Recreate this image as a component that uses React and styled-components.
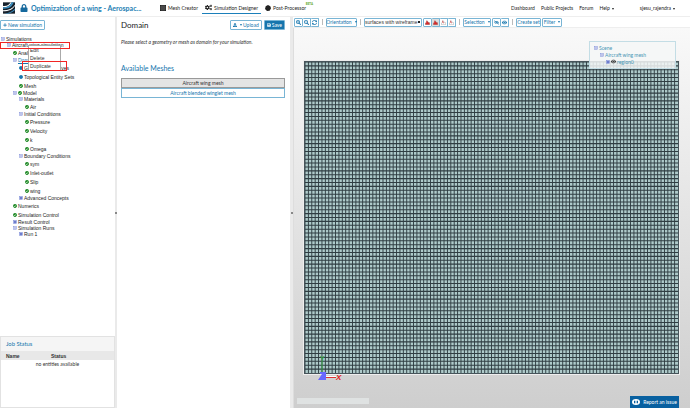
import styled, { createGlobalStyle, css } from "styled-components";
import {
  FaCheckCircle,
  FaCircle,
  FaCogs,
  FaEye,
  FaEyeSlash,
  FaLock,
  FaPlus,
  FaSave,
  FaSearchMinus,
  FaSearchPlus,
  FaSyncAlt,
  FaUpload,
} from "react-icons/fa";

const GlobalStyle = createGlobalStyle`
  * { box-sizing: border-box; }
  body {
    margin: 0;
    background: #fff;
    color: #333;
    font-family: Lato, sans-serif;
    font-size: 5px;
    line-height: 6px;
  }
  button, select { font: inherit; color: inherit; margin: 0; }
  h1, h2, h3, ul { margin: 0; padding: 0; font-weight: 400; }
  ul { list-style: none; }
  a { color: inherit; text-decoration: none; }
  svg { display: block; flex: none; }
`;

const Page = styled.div`
  min-height: 100vh;
  display: flex;
  flex-direction: column;
`;

const Header = styled.header`
  height: 17px;
  display: flex;
  align-items: center;
  padding: 0 15px 0 3px;
  border-bottom: 1px solid #eee;
`;

const Brand = styled.div`
  width: 154px;
  display: flex;
  align-items: center;
  gap: 5px;
  color: #16699d;
`;

const ProjectTitle = styled.h1`
  display: flex;
  align-items: center;
  gap: 3px;
  font-size: 7px;
  line-height: 12px;
  font-weight: 700;
  color: #2580b3;
  white-space: nowrap;
`;

const Tabs = styled.nav`
  display: flex;
  gap: 1px;
`;

const Tab = styled.a`
  position: relative;
  display: flex;
  align-items: center;
  gap: 2px;
  height: 11px;
  padding: 0 3px;
  border-bottom: 1px solid ${({ $active }) => ($active ? "#1b7fba" : "transparent")};
  white-space: nowrap;
  color: #222;
`;

const Beta = styled.sup`
  position: absolute;
  right: -4px;
  top: 0;
  font-size: 3px;
  line-height: 3px;
  font-weight: 700;
  color: #65a82c;
`;

const Links = styled.nav`
  display: flex;
  gap: 6px;
  margin-left: auto;
  white-space: nowrap;
  color: #222;
`;

const UserLink = styled.a`
  margin-left: 20px;
`;

const Caret = styled.i`
  display: inline-block;
  margin-left: 2px;
  vertical-align: middle;
  border: 1px solid transparent;
  border-width: 2px 1px 0;
  border-top-color: currentColor;
`;

const Workspace = styled.div`
  flex: 1;
  display: grid;
  grid-template-columns: 115px 2px 173px 3px 1fr;
`;

const Splitter = styled.div`
  display: flex;
  align-items: center;
  justify-content: center;
  background: #eaeaea;

  &::after {
    content: "";
    width: 2px;
    height: 2px;
    background: #888;
  }
`;

const Sidebar = styled.aside`
  display: flex;
  flex-direction: column;
  justify-content: space-between;
`;

const Button = styled.button`
  display: flex;
  align-items: center;
  justify-content: center;
  gap: 1px;
  height: ${({ $tall }) => ($tall ? 10 : 9)}px;
  padding: 0 2px;
  border: 1px solid #79b5d5;
  border-radius: 1px;
  background: ${({ $primary }) => ($primary ? "#1675ad" : "#fff")};
  color: ${({ $primary }) => ($primary ? "#fff" : "#1675ad")};
  white-space: nowrap;
`;

const TreeArea = styled.div`
  position: relative;
  padding-top: 3px;
  font-family: "Liberation Sans", sans-serif;
`;

const NewButton = styled(Button)`
  font-family: Lato, sans-serif;
`;

const Tree = styled.ul`
  margin-top: 6px;
`;

const TreeRow = styled.li`
  display: flex;
  align-items: center;
  gap: 1px;
  height: ${({ $leaf }) => ($leaf ? 9 : 6)}px;
  padding-left: ${({ $level }) => 1 + $level * 6}px;
  white-space: nowrap;
  color: #222;
  ${({ $link }) =>
    $link &&
    css`
      color: #1675ad;
      text-decoration: underline;
    `}
`;

const Menu = styled.ul`
  position: absolute;
  left: 28px;
  top: 28px;
  width: 33px;
  border: 1px solid #aaa;
  background: #fff;
`;

const MenuItem = styled.button`
  display: block;
  width: 100%;
  height: 8px;
  padding: 0 0 0 1px;
  border: 0;
  background: none;
  text-align: left;
  line-height: 8px;
`;

const Highlight = styled.div`
  position: absolute;
  left: ${({ $x }) => $x}px;
  top: ${({ $y }) => $y}px;
  width: ${({ $w }) => $w}px;
  height: ${({ $h }) => $h}px;
  border: 1px solid #f02525;
  pointer-events: none;
`;

const JobPanel = styled.section`
  height: 72px;
  border: 1px solid #e2e2e2;
`;

const JobTitle = styled.h3`
  height: 14px;
  padding-left: 5px;
  background: #f5f5f5;
  color: #1675ad;
  line-height: 14px;
`;

const JobTable = styled.table`
  width: 100%;
  border-collapse: collapse;
  table-layout: fixed;

  th {
    height: 9px;
    padding: 0 0 0 5px;
    background: #e8e8e8;
    font-family: "Liberation Sans", sans-serif;
    text-align: left;
  }
  th:first-child {
    width: 45px;
  }
  td {
    padding: 0;
    height: 7px;
    text-align: center;
  }
`;

const Details = styled.main`
  padding: 3px 5px 0 4px;
`;

const DetailsHead = styled.div`
  display: flex;
  align-items: center;
  gap: 2px;
`;

const DetailsTitle = styled.h2`
  flex: 1;
  font-size: 8px;
  line-height: 10px;
  color: #222;
`;

const Hint = styled.p`
  margin: 9px 0 0;
  font-style: italic;
`;

const Subtitle = styled.h3`
  margin: 19px 0 6px;
  font-size: 7px;
  line-height: 8px;
  color: #1675ad;
`;

const MeshOption = styled.button`
  display: block;
  width: 100%;
  height: 10px;
  padding: 0;
  border: 1px solid ${({ $selected }) => ($selected ? "#999" : "#79b5d5")};
  background: ${({ $selected }) => ($selected ? "#e4e4e4" : "#fff")};
  color: ${({ $selected }) => ($selected ? "#333" : "#1675ad")};
  line-height: 6px;
`;

const Viewer = styled.section`
  display: flex;
  flex-direction: column;
  min-width: 0;
`;

const Toolbar = styled.div`
  display: flex;
  align-items: center;
  gap: 1px;
  height: 11px;
  padding-left: 1px;
  border-bottom: 1px solid #eee;
`;

const Group = styled.div`
  display: flex;

  & > button + button {
    border-left: 0;
  }
`;

const ToolButton = styled(Button)`
  width: ${({ $w }) => $w}px;
  padding: 0;
  ${({ $pressed }) => $pressed && "background: #ddd;"}
`;

const Separator = styled.span`
  width: 1px;
  height: 6px;
  margin: 0 2px;
  background: #bbb;
`;

const ModeSelect = styled.select`
  appearance: none;
  width: 58px;
  height: 9px;
  padding: 0;
  border: 1px solid #79b5d5;
  border-radius: 1px;
  background:
    linear-gradient(#222, #222) right 1px center / 2px 2px no-repeat,
    #fff;
  color: #333;
  font-family: "Liberation Sans", sans-serif;
`;

const Canvas = styled.div`
  position: relative;
  flex: 1;
  display: flex;
  padding: 33px 11px 34px 10px;
  border-left: 1px solid #ddd;
  background: linear-gradient(#f9f9f9, #cecece);
`;

const MeshDrawing = styled.svg`
  flex: 1;
  width: 100%;
  height: auto;
  min-width: 0;
  border: 1px solid #46545a;
  outline: 1px solid #eee;
`;

const ScenePanel = styled.ul`
  position: absolute;
  right: 14px;
  top: 13px;
  width: 87px;
  height: 28px;
  padding: 2px 4px;
  border: 1px solid #c3dde5;
  background: rgba(245, 247, 247, 0.85);
`;

const SceneRow = styled.li`
  display: flex;
  align-items: center;
  gap: 1px;
  height: 7px;
  padding-left: ${({ $level }) => $level * 6}px;
  color: #4795b5;
`;

const Axes = styled.svg`
  position: absolute;
  left: 23px;
  bottom: 26px;
  font-family: "Liberation Sans", sans-serif;
  font-weight: 700;
`;

const StatusBar = styled.div`
  position: absolute;
  left: 3px;
  bottom: 4px;
  width: 72px;
  height: 6px;
  background: #dfe2e2;
`;

const ReportButton = styled.button`
  position: absolute;
  right: 11px;
  bottom: 0;
  display: flex;
  align-items: center;
  justify-content: center;
  gap: 3px;
  width: 49px;
  height: 12px;
  padding: 0;
  border: 0;
  background: #0860a0;
  color: #fff;
  white-space: nowrap;
`;

const tree = [
  { level: 0, text: "Simulations", toggle: "minus" },
  { level: 1, text: "Aircraft wing simulation", toggle: "minus" },
  { level: 2, text: "Analysis Type", mark: "ok" },
  { level: 2, text: "Domain", toggle: "minus", link: true },
  { level: 3, text: "Geometry Primitives", mark: "dot" },
  { level: 3, text: "Topological Entity Sets", mark: "dot" },
  { level: 3, text: "Mesh", mark: "ok" },
  { level: 2, text: "Model", toggle: "minus", mark: "ok" },
  { level: 3, text: "Materials", toggle: "minus" },
  { level: 4, text: "Air", mark: "ok" },
  { level: 3, text: "Initial Conditions", toggle: "minus" },
  { level: 4, text: "Pressure", mark: "ok" },
  { level: 4, text: "Velocity", mark: "ok" },
  { level: 4, text: "k", mark: "ok" },
  { level: 4, text: "Omega", mark: "ok" },
  { level: 3, text: "Boundary Conditions", toggle: "minus" },
  { level: 4, text: "sym", mark: "ok" },
  { level: 4, text: "Inlet-outlet", mark: "ok" },
  { level: 4, text: "Slip", mark: "ok" },
  { level: 4, text: "wing", mark: "ok" },
  { level: 3, text: "Advanced Concepts", toggle: "plus" },
  { level: 2, text: "Numerics", mark: "ok" },
  { level: 2, text: "Simulation Control", mark: "ok" },
  { level: 2, text: "Result Control", toggle: "plus" },
  { level: 2, text: "Simulation Runs", toggle: "minus" },
  { level: 3, text: "Run 1", toggle: "plus" },
];

const Toggle = ({ type }) => (
  <svg width="4" height="4" viewBox="0 0 8 8">
    <rect x="1" y="1" width="6" height="6" fill={type === "plus" ? "#9fa9e8" : "#eef"} stroke="#7d8bd6" />
    <path d={type === "plus" ? "M2 4h4M4 2v4" : "M2 4h4"} stroke="#3344aa" />
  </svg>
);

const Mark = ({ type }) =>
  type === "ok" ? <FaCheckCircle size={4} color="#16851d" /> : <FaCircle size={4} color="#1675ad" />;

const Logo = () => (
  <svg width="12" height="12" viewBox="0 0 36 36">
    <path d="M0 1h36v34H0z" fill="#17212b" />
    <path d="M0 12C13 13 18 9 23 1h3C21 12 13 16 0 16z" fill="#fff" />
    <path d="M0 16C13 16 21 12 26 1h6C26 17 15 21 0 20z" fill="#3c8fc0" />
    <path d="M0 25c17 0 29-6 36-17v3C29 22 18 28 0 28z" fill="#fff" />
    <path d="M5 35c13-2 23-7 31-15v4c-6 6-13 9-20 11z" fill="#3c8fc0" />
  </svg>
);

const GridIcon = () => (
  <svg width="6" height="6" viewBox="0 0 18 18">
    <path d="M0 0h18v18H0z" fill="#222" />
    <path d="M6 0v18M12 0v18M0 6h18M0 12h18" stroke="#aaa" strokeWidth="1" />
  </svg>
);

const BallIcon = () => (
  <svg width="6" height="6" viewBox="0 0 18 18">
    <path d="M9 0l7 4 2 6-4 7-8 1-6-6 2-8z" fill="#222" />
  </svg>
);

const PickIcon = ({ filled }) => (
  <svg width="5" height="5" viewBox="0 0 15 15">
    <path d="M6 2l4 5 4 1v6H1V9l4-2z" fill={filled ? "#d82a2a" : "#fff"} stroke="#777" />
    <path d="M5 2v5l4 2" fill="none" stroke="#d82a2a" strokeWidth="2" />
  </svg>
);

const columns = Array.from({ length: 110 }, (_, i) => `M${i * 4} 0v320`).join("");
const rows = Array.from({ length: 80 }, (_, i) => `M0 ${i * 4}h440`).join("");

const MeshView = () => (
  <MeshDrawing viewBox="0 0 440 320" preserveAspectRatio="none">
    <rect width="440" height="320" fill="#aecaca" />
    <path d={columns + rows} stroke="#2f3d42" strokeWidth="1.1" />
  </MeshDrawing>
);

const App = () => {
  return (
    <>
      <GlobalStyle />
      <Page>
        <Header>
          <Brand>
            <Logo />
            <ProjectTitle>
              <FaLock size={8} color="#16699d" />
              Optimization of a wing - Aerospac...
            </ProjectTitle>
          </Brand>
          <Tabs>
            <Tab href="#"><GridIcon />Mesh Creator</Tab>
            <Tab href="#" $active><FaCogs size={7} />Simulation Designer</Tab>
            <Tab href="#"><BallIcon />Post-Processor<Beta>BETA</Beta></Tab>
          </Tabs>
          <Links>
            <a href="#">Dashboard</a>
            <a href="#">Public Projects</a>
            <a href="#">Forum</a>
            <a href="#">Help<Caret /></a>
            <UserLink href="#">sjesu_rajendra<Caret /></UserLink>
          </Links>
        </Header>
        <Workspace>
          <Sidebar>
            <TreeArea>
              <NewButton $tall><FaPlus size={4} />New simulation</NewButton>
              <Tree>
                {tree.map((row) => (
                  <TreeRow key={row.text} $level={row.level} $leaf={!row.toggle} $link={row.link}>
                    {row.toggle && <Toggle type={row.toggle} />}
                    {row.mark && <Mark type={row.mark} />}
                    {row.text}
                  </TreeRow>
                ))}
              </Tree>
              <Menu>
                <li><MenuItem>Edit</MenuItem></li>
                <li><MenuItem>Delete</MenuItem></li>
                <li><MenuItem>Duplicate</MenuItem></li>
              </Menu>
              <Highlight $x={0} $y={25} $w={70} $h={7} />
              <Highlight $x={22} $y={44} $w={45} $h={10} />
            </TreeArea>
            <JobPanel>
              <JobTitle>Job Status</JobTitle>
              <JobTable>
                <thead>
                  <tr><th>Name</th><th>Status</th></tr>
                </thead>
                <tbody>
                  <tr><td colSpan={2}>no entities available</td></tr>
                </tbody>
              </JobTable>
            </JobPanel>
          </Sidebar>
          <Splitter />
          <Details>
            <DetailsHead>
              <DetailsTitle>Domain</DetailsTitle>
              <Button $tall><FaUpload size={4} /><Caret />Upload</Button>
              <Button $tall $primary><FaSave size={4} />Save</Button>
            </DetailsHead>
            <Hint>Please select a geometry or mesh as domain for your simulation.</Hint>
            <Subtitle>Available Meshes</Subtitle>
            <MeshOption $selected>Aircraft wing mesh</MeshOption>
            <MeshOption>Aircraft blended winglet mesh</MeshOption>
          </Details>
          <Splitter />
          <Viewer>
            <Toolbar>
              <Group>
                <ToolButton $w={9} aria-label="Zoom in"><FaSearchPlus size={5} /></ToolButton>
                <ToolButton $w={8} aria-label="Zoom out"><FaSearchMinus size={5} /></ToolButton>
                <ToolButton $w={8} aria-label="Reset view"><FaSyncAlt size={5} /></ToolButton>
              </Group>
              <Separator />
              <ToolButton $w={31}>Orientation<Caret /></ToolButton>
              <Separator />
              <ModeSelect aria-label="Render mode">
                <option>surfaces with wireframe</option>
              </ModeSelect>
              <Group>
                <ToolButton $w={9} aria-label="Pick volumes"><PickIcon filled /></ToolButton>
                <ToolButton $w={8} $pressed aria-label="Pick faces"><PickIcon filled /></ToolButton>
                <ToolButton $w={8} aria-label="Pick edges"><PickIcon /></ToolButton>
                <ToolButton $w={8} aria-label="Pick nodes"><PickIcon /></ToolButton>
              </Group>
              <Separator />
              <ToolButton $w={28}>Selection<Caret /></ToolButton>
              <Group>
                <ToolButton $w={9} aria-label="Hide selection"><FaEyeSlash size={5} /></ToolButton>
                <ToolButton $w={8} aria-label="Show all"><FaEye size={5} /></ToolButton>
              </Group>
              <Separator />
              <ToolButton $w={25}>Create set</ToolButton>
              <ToolButton $w={20}>Filter<Caret /></ToolButton>
            </Toolbar>
            <Canvas>
              <MeshView />
              <ScenePanel>
                <SceneRow $level={0}><Toggle type="minus" />Scene</SceneRow>
                <SceneRow $level={1}><Toggle type="minus" />Aircraft wing mesh</SceneRow>
                <SceneRow $level={2}><Toggle type="plus" /><FaEye size={5} color="#333" />region0</SceneRow>
              </ScenePanel>
              <Axes width="28" height="28" viewBox="0 0 28 28">
                <path d="M5 18V7" stroke="#35a045" />
                <path d="M8 22.5h11" stroke="#fff" />
                <path d="M8 23.5h11" stroke="#d33" />
                <path d="M1 26l4-6H3v-2h6v8z" fill="#6868ff" />
                <text x="3" y="7" fontSize="7" fill="#35a045">Y</text>
                <text x="19" y="26" fontSize="8" fontStyle="italic" fill="#e22020">X</text>
              </Axes>
              <StatusBar />
              <ReportButton>
                <svg width="8" height="6" viewBox="0 0 24 18">
                  <ellipse cx="12" cy="9" rx="12" ry="9" fill="#fff" />
                  <path d="M6 5h4v8H6zM14 5h4v8h-4z" fill="#0860a0" />
                </svg>
                Report an issue
              </ReportButton>
            </Canvas>
          </Viewer>
        </Workspace>
      </Page>
    </>
  );
};

export default App;
